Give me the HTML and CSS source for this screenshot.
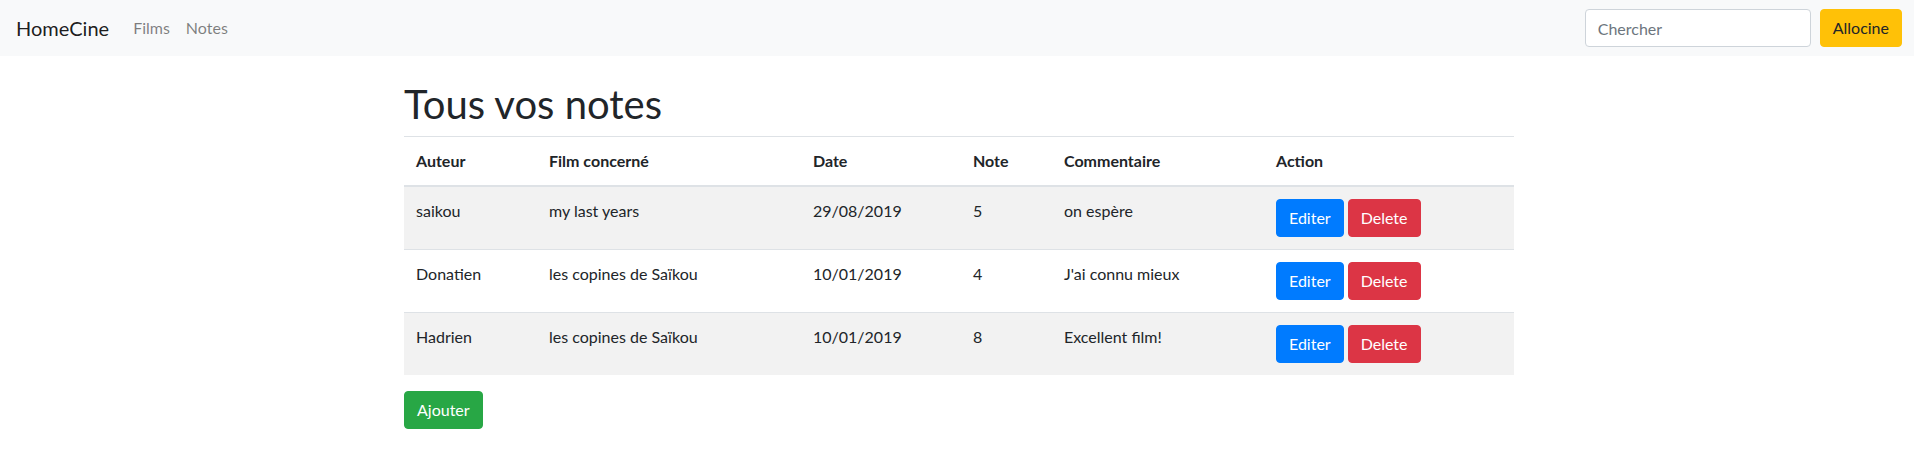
FILE: index.html
```html
<!DOCTYPE html>
<html lang="fr">
<head>
<meta charset="utf-8">
<title>HomeCine</title>
<link rel="stylesheet" href="styles.css">
</head>
<body>
<nav class="navbar">
  <div class="nav-left">
    <a class="brand" href="#">HomeCine</a>
    <ul class="nav-links">
      <li><a class="nav-link" href="#">Films</a></li>
      <li><a class="nav-link" href="#">Notes</a></li>
    </ul>
  </div>
  <form class="search-form">
    <input class="search-input" type="search" placeholder="Chercher">
    <button class="btn btn-warning" type="button">Allocine</button>
  </form>
</nav>
<main class="main">
  <div class="container">
    <h1 class="title">Tous vos notes</h1>
    <table class="table">
      <colgroup>
        <col class="c-auteur">
        <col class="c-film">
        <col class="c-date">
        <col class="c-note">
        <col class="c-comment">
        <col class="c-action">
      </colgroup>
      <thead>
        <tr>
          <th>Auteur</th>
          <th>Film concerné</th>
          <th>Date</th>
          <th>Note</th>
          <th>Commentaire</th>
          <th>Action</th>
        </tr>
      </thead>
      <tbody>
        <tr class="striped">
          <td>saikou</td>
          <td>my last years</td>
          <td>29/08/2019</td>
          <td>5</td>
          <td>on espère</td>
          <td><div class="actions"><button class="btn btn-primary">Editer</button><button class="btn btn-danger">Delete</button></div></td>
        </tr>
        <tr>
          <td>Donatien</td>
          <td>les copines de Saïkou</td>
          <td>10/01/2019</td>
          <td>4</td>
          <td>J'ai connu mieux</td>
          <td><div class="actions"><button class="btn btn-primary">Editer</button><button class="btn btn-danger">Delete</button></div></td>
        </tr>
        <tr class="striped">
          <td>Hadrien</td>
          <td>les copines de Saïkou</td>
          <td>10/01/2019</td>
          <td>8</td>
          <td>Excellent film!</td>
          <td><div class="actions"><button class="btn btn-primary">Editer</button><button class="btn btn-danger">Delete</button></div></td>
        </tr>
      </tbody>
    </table>
    <button class="btn btn-success">Ajouter</button>
  </div>
</main>
</body>
</html>
```
FILE: styles.css
```css
* { box-sizing: border-box; }
html, body { margin: 0; padding: 0; }
body {
  font-family: "Segoe UI", Lato, "Noto Sans", "Liberation Sans", sans-serif;
  font-size: 16px;
  line-height: 24px;
  color: #212529;
  background: #fff;
}
a { text-decoration: none; }

.navbar {
  display: flex;
  align-items: center;
  justify-content: space-between;
  height: 56px;
  padding: 8px 12px 8px 16px;
  background: #f8f9fa;
}
.nav-left { display: flex; align-items: center; }
.brand {
  font-size: 20px;
  line-height: 30px;
  padding: 5px 0;
  margin-right: 16px;
  color: rgba(0,0,0,.9);
}
.nav-links { display: flex; list-style: none; margin: 0; padding: 0; }
.nav-link {
  display: block;
  padding: 8px;
  color: rgba(0,0,0,.5);
}
.search-form { display: flex; align-items: center; }
.search-input {
  width: 226px;
  height: 38px;
  margin-right: 9px;
  padding: 6px 12px;
  font: inherit;
  color: #495057;
  background: #fff;
  border: 1px solid #ced4da;
  border-radius: 4px;
}
.search-input::placeholder { color: #6c757d; }

.btn {
  display: inline-block;
  font: inherit;
  font-size: 16px;
  line-height: 24px;
  padding: 6px 12px;
  border: 1px solid transparent;
  border-radius: 4px;
  color: #fff;
  cursor: pointer;
}
.btn-warning { background: #ffc107; border-color: #ffc107; color: #212529; }
.btn-primary { background: #007bff; border-color: #007bff; }
.btn-danger { background: #dc3545; border-color: #dc3545; }
.btn-success { background: #28a745; border-color: #28a745; }

.main { padding-left: 4px; }
.container {
  max-width: 1140px;
  margin: 0 auto;
  padding: 0 15px;
}
.title {
  margin: 24px 0 8px;
  font-size: 40px;
  line-height: 48px;
  font-weight: 400;
}
.table {
  width: 100%;
  table-layout: fixed;
  border-collapse: collapse;
  margin-bottom: 16px;
}
.c-auteur { width: 133px; }
.c-film { width: 264px; }
.c-date { width: 160px; }
.c-note { width: 91px; }
.c-comment { width: 212px; }
.c-action { width: 250px; }
.table th, .table td {
  padding: 12px;
  text-align: left;
  vertical-align: top;
  border-top: 1px solid #dee2e6;
}
.table th {
  font-weight: 700;
  vertical-align: bottom;
  border-bottom: 2px solid #dee2e6;
}
.table tbody tr:first-child td { border-top: 0; }
.striped { background: #f2f2f2; }
.actions { display: flex; gap: 4px; }
```
